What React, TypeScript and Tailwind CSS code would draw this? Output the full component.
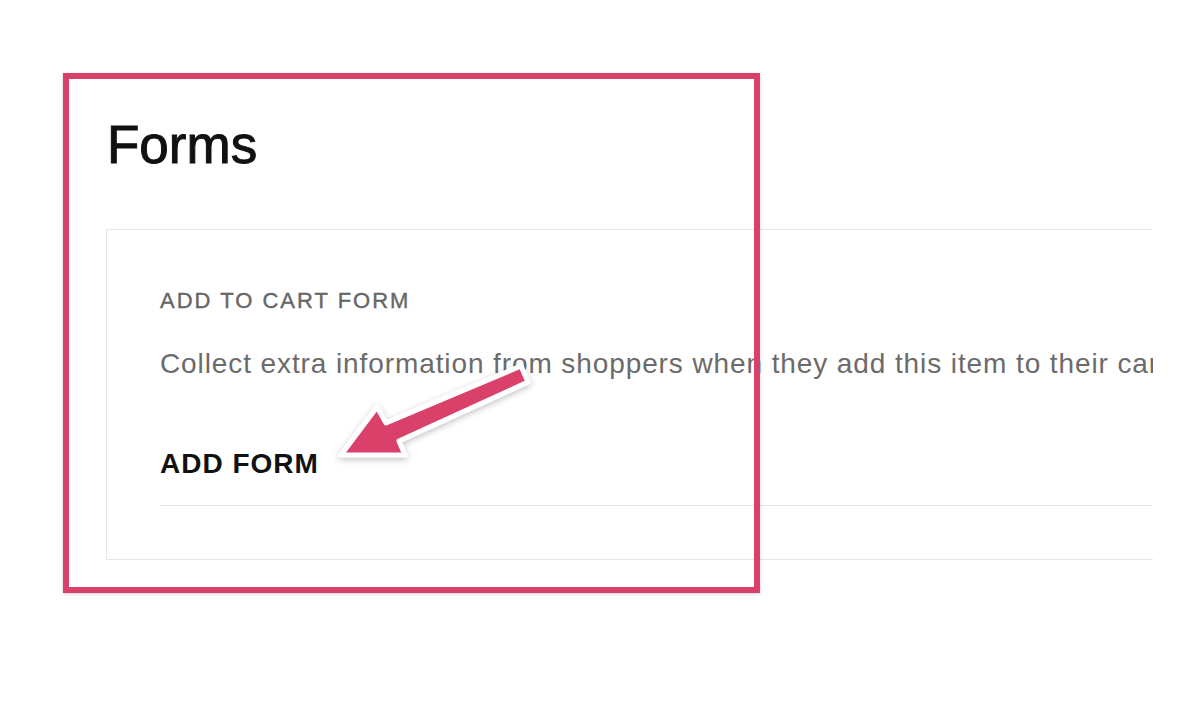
export default function App() {
    return (
        <div className="relative w-[1200px] h-[709px] overflow-hidden bg-white font-['Liberation_Sans',Arial,sans-serif]">
            <div className="pt-[118px] pl-[106px]">
                {/* Page title */}
                <h1 className="pl-px text-[53px] leading-none font-normal text-[#111111] [-webkit-text-stroke:1px_#111111]">Forms</h1>

                {/* Card, cut off at the right edge of the panel */}
                <div className="mt-[58px] w-[1047px] h-[331px] overflow-hidden border-y border-l border-[#e6e6e6]">
                    <div className="pl-[53px] pt-[60px]">
                        <div className="text-[22px] leading-none tracking-[2px] text-[#666666] [-webkit-text-stroke:0.4px_#666666]">ADD TO CART FORM</div>
                        <p className="mt-[38px] whitespace-nowrap text-[28px] leading-none tracking-[0.9px] text-[#6b6b6b]">
                            Collect extra information from shoppers when they add this item to their cart.
                        </p>
                        <div className="mt-[72px] border-b border-[#e6e6e6] pb-[25px]">
                            <button type="button" className="text-[28px] leading-none font-bold tracking-[1px] text-[#111111]">
                                ADD FORM
                            </button>
                        </div>
                    </div>
                </div>
            </div>

            {/* Annotation box */}
            <div className="absolute left-[63px] top-[73px] w-[697px] h-[520px] border-[6px] border-[#d9416b] shadow-[0_1px_3px_rgba(0,0,0,0.2)]" />

            {/* Annotation arrow */}
            <svg className="absolute inset-0" width="1200" height="709" viewBox="0 0 1200 709">
                <defs>
                    <filter id="arrowShadow" x="-20%" y="-20%" width="140%" height="140%">
                        <feDropShadow dx="0" dy="2" stdDeviation="3" floodColor="#000" floodOpacity="0.25" />
                    </filter>
                </defs>
                <polygon
                    points="521,366 528,382 399,441 405,455 341,455 377,407 386,423"
                    fill="#d9416b"
                    stroke="#ffffff"
                    strokeWidth="5"
                    strokeLinejoin="round"
                    filter="url(#arrowShadow)"
                />
            </svg>
        </div>
    );
}
